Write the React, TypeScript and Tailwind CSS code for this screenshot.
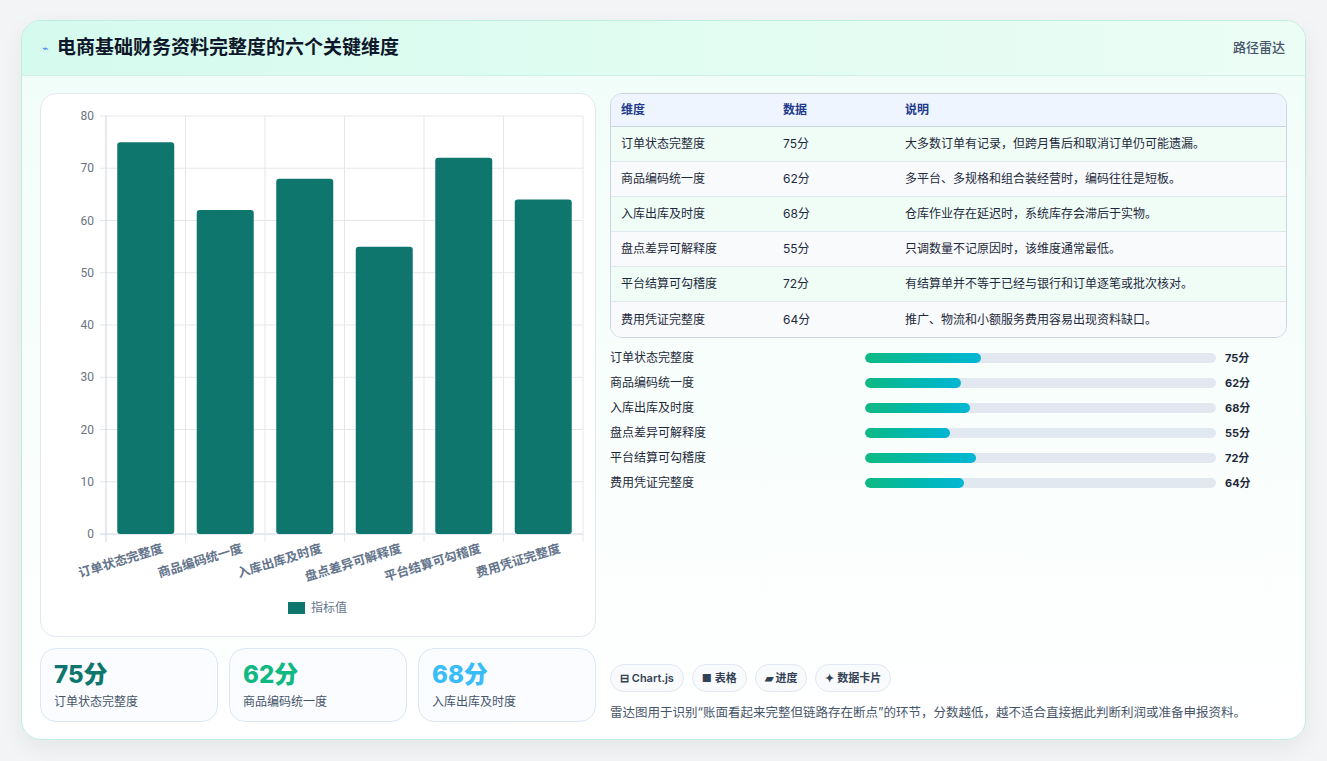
import React from "react";

const data = [
  ["订单状态完整度", 75, "大多数订单有记录，但跨月售后和取消订单仍可能遗漏。"],
  ["商品编码统一度", 62, "多平台、多规格和组合装经营时，编码往往是短板。"],
  ["入库出库及时度", 68, "仓库作业存在延迟时，系统库存会滞后于实物。"],
  ["盘点差异可解释度", 55, "只调数量不记原因时，该维度通常最低。"],
  ["平台结算可勾稽度", 72, "有结算单并不等于已经与银行和订单逐笔或批次核对。"],
  ["费用凭证完整度", 64, "推广、物流和小额服务费用容易出现资料缺口。"],
] as const;

function Chart() {
  const x0 = 65, x1 = 542, yTop = 22, yBot = 440;
  const step = (x1 - x0) / 6;
  const y = (v: number) => yBot - (v / 80) * (yBot - yTop);
  return (
    <svg width="555" height="543" className="block">
      {[0, 10, 20, 30, 40, 50, 60, 70, 80].map((v) => (
        <g key={v}>
          <line x1={x0 - 6} x2={x1} y1={y(v)} y2={y(v)} stroke={v === 0 ? "#cbd5e1" : "#e5e7eb"} />
          <text x={x0 - 12} y={y(v) + 4} textAnchor="end" fontSize="12" fill="#6b7280" fontFamily="Roboto, sans-serif">{v}</text>
        </g>
      ))}
      {Array.from({ length: 7 }).map((_, i) => (
        <line key={i} x1={x0 + i * step} x2={x0 + i * step} y1={yTop} y2={yBot + 8} stroke={i === 0 ? "#cbd5e1" : "#e5e7eb"} />
      ))}
      {data.map((d, i) => {
        const cx = x0 + step * (i + 0.5);
        return (
          <g key={i}>
            <rect x={cx - 28.5} y={y(d[1])} width="57" height={yBot - y(d[1])} rx="3" fill="#0f766e" />
            <text x={cx + 18} y={yBot + 18} textAnchor="end" fontSize="12.5" fontWeight="600" fill="#64748b" transform={`rotate(-17 ${cx + 18} ${yBot + 18})`} fontFamily="'Noto Sans CJK SC', sans-serif">{d[0]}</text>
          </g>
        );
      })}
      <rect x="247" y="508" width="17" height="12" fill="#0f766e" />
      <text x="270" y="518" fontSize="12" fill="#64748b" fontFamily="'Noto Sans CJK SC', sans-serif">指标值</text>
    </svg>
  );
}

export default function App() {
  return (
    <div className="w-[1327px] h-[761px] bg-[#f3f4f6] pt-[20px] pl-[21px]" style={{ fontFamily: "Inter, 'Noto Sans CJK SC', sans-serif" }}>
      <div className="w-[1285px] h-[720px] rounded-[20px] border border-[#bfeee0] bg-gradient-to-b from-[#f0fdf8] to-white overflow-hidden shadow-[0_8px_24px_rgba(0,0,0,0.06)]">
        <div className="h-[55px] flex items-center justify-between px-[20px] bg-gradient-to-r from-[#d5fbee] to-[#ecfdf5] border-b border-[#d1f0e6]">
          <div className="flex items-center gap-[8px]">
            <span className="text-[#3b82f6] text-[11px]">⌁</span>
            <span className="text-[19px] font-bold text-[#0f172a]">电商基础财务资料完整度的六个关键维度</span>
          </div>
          <span className="text-[13px] text-[#475569] font-medium">路径雷达</span>
        </div>
        <div className="flex gap-[14px] px-[18px] pt-[17px]">
          <div className="w-[556px] flex flex-col gap-[11px]">
            <div className="h-[544px] rounded-[16px] border border-[#e2e8f0] bg-white overflow-hidden"><Chart /></div>
            <div className="grid grid-cols-3 gap-[11px]">
              {[["75分", "text-[#0f766e]"], ["62分", "text-[#10b981]"], ["68分", "text-[#38bdf8]"]].map((s, i) => (
                <div key={i} className="h-[74px] rounded-[16px] border border-[#dbe7f3] bg-[#fafcff] px-[13px] pt-[10px]">
                  <div className={`text-[24px] font-extrabold leading-[32px] ${s[1]}`}>{s[0]}</div>
                  <div className="text-[12px] text-[#475569] mt-[2px]">{data[i][0]}</div>
                </div>
              ))}
            </div>
          </div>
          <div className="flex-1 flex flex-col">
            <div className="rounded-[12px] border border-[#cbd5e1] overflow-hidden text-[12px] text-[#1e293b]">
              <div className="h-[33px] flex items-center bg-[#eef5ff] border-b border-[#cbd5e1] font-semibold text-[#1e3a8a]">
                <div className="w-[172px] pl-[10px]">维度</div><div className="w-[122px]">数据</div><div>说明</div>
              </div>
              {data.map((d, i) => (
                <div key={i} className={`h-[35px] flex items-center ${i % 2 ? "bg-[#f8fafc]" : "bg-[#f0fdf7]"} ${i < 5 ? "border-b border-[#e2e8f0]" : ""}`}>
                  <div className="w-[172px] pl-[10px]">{d[0]}</div><div className="w-[122px]">{d[1]}分</div><div>{d[2]}</div>
                </div>
              ))}
            </div>
            <div className="mt-[11px] flex flex-col gap-[7px]">
              {data.map((d, i) => (
                <div key={i} className="h-[18px] flex items-center text-[12px] text-[#1e293b]">
                  <div className="w-[255px]">{d[0]}</div>
                  <div className="w-[351px] h-[10px] rounded-full bg-[#e2e8f0] overflow-hidden">
                    <div className="h-full rounded-full bg-gradient-to-r from-[#10b981] to-[#06b6d4]" style={{ width: `${(d[1] / 100) * 44}%` }} />
                  </div>
                  <div className="ml-[9px] font-bold text-[11px]">{d[1]}分</div>
                </div>
              ))}
            </div>
            <div className="mt-[172px] flex gap-[8px]">
              {["⊟ Chart.js", "■ 表格", "▰ 进度", "✦ 数据卡片"].map((c) => (
                <span key={c} className="h-[28px] px-[9px] flex items-center rounded-full border border-[#e2e8f0] bg-[#f8fafc] text-[11px] font-semibold text-[#334155]">{c}</span>
              ))}
            </div>
            <div className="mt-[12px] text-[12.5px] text-[#475569]">雷达图用于识别“账面看起来完整但链路存在断点”的环节，分数越低，越不适合直接据此判断利润或准备申报资料。</div>
          </div>
        </div>
      </div>
    </div>
  );
}
